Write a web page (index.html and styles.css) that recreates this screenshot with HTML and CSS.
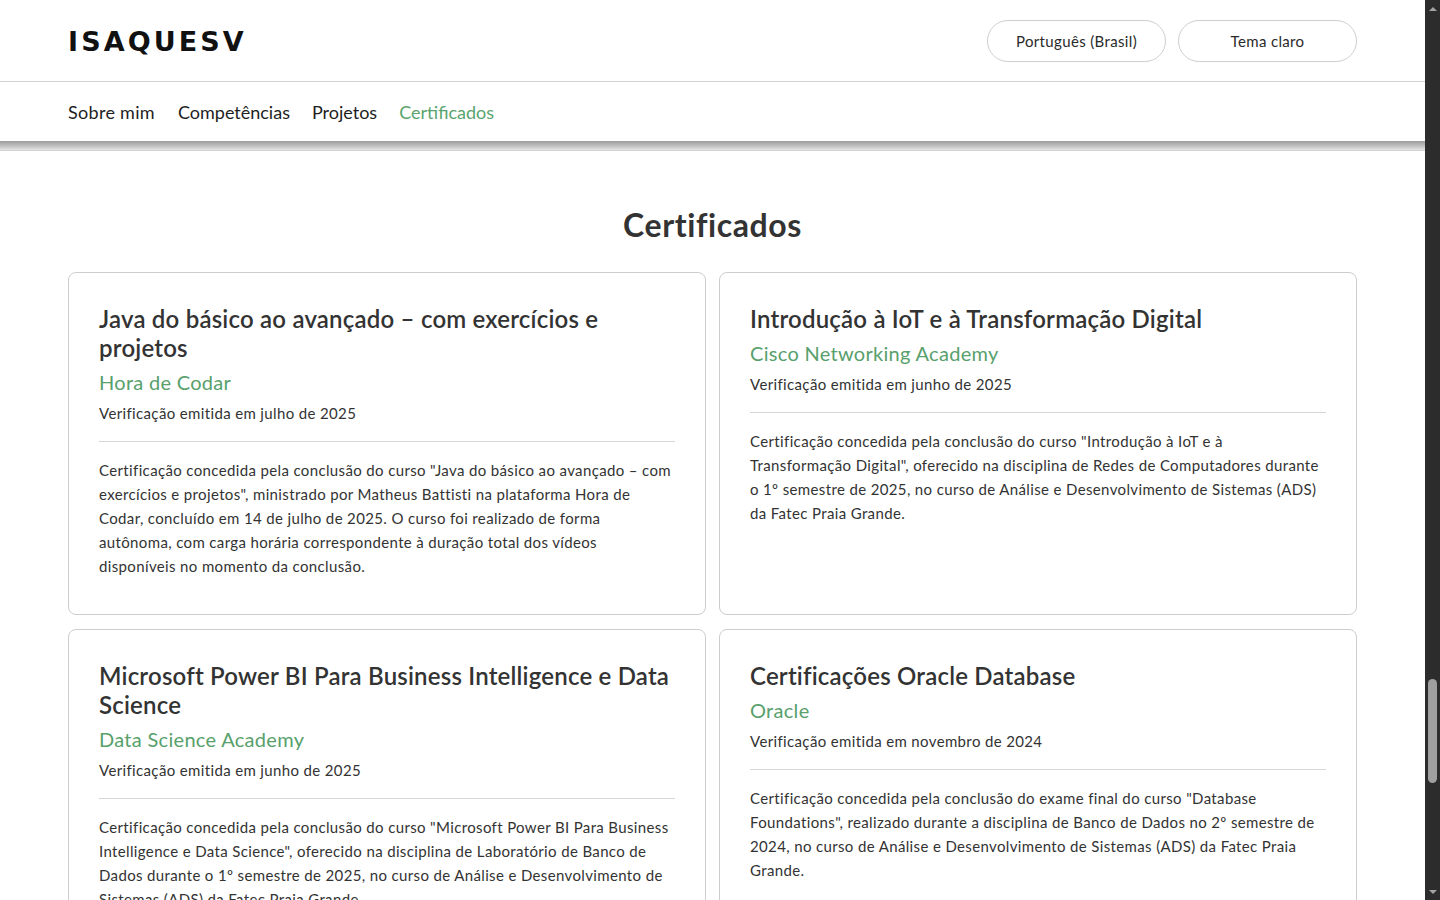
FILE: index.html
```html
<!DOCTYPE html>
<html lang="pt-BR">
<head>
<meta charset="utf-8">
<title>IsaqueSV — Certificados</title>
<link rel="stylesheet" href="styles.css">
</head>
<body>
<div class="viewport">
  <header class="site-header">
    <div class="topbar">
      <div class="container topbar-inner">
        <a class="logo" href="#">ISAQUESV</a>
        <div class="actions">
          <button class="pill" type="button">Português (Brasil)</button>
          <button class="pill" type="button">Tema claro</button>
        </div>
      </div>
    </div>
    <nav class="nav">
      <div class="container nav-inner">
        <a href="#sobre">Sobre mim</a>
        <a href="#competencias">Competências</a>
        <a href="#projetos">Projetos</a>
        <a href="#certificados" class="active">Certificados</a>
      </div>
    </nav>
    <div class="header-shadow"></div>
  </header>

  <main>
    <section class="certs container" id="certificados">
      <h2 class="section-title">Certificados</h2>
      <div class="cert-grid">
        <article class="card">
          <h3 class="card-title">Java do básico ao avançado – com exercícios e projetos</h3>
          <p class="org">Hora de Codar</p>
          <p class="issued">Verificação emitida em julho de 2025</p>
          <hr class="divider">
          <p class="desc">Certificação concedida pela conclusão do curso "Java do básico ao avançado – com exercícios e projetos", ministrado por Matheus Battisti na plataforma Hora de Codar, concluído em 14 de julho de 2025. O curso foi realizado de forma autônoma, com carga horária correspondente à duração total dos vídeos disponíveis no momento da conclusão.</p>
        </article>
        <article class="card">
          <h3 class="card-title">Introdução à IoT e à Transformação Digital</h3>
          <p class="org">Cisco Networking Academy</p>
          <p class="issued">Verificação emitida em junho de 2025</p>
          <hr class="divider">
          <p class="desc">Certificação concedida pela conclusão do curso "Introdução à IoT e à Transformação Digital", oferecido na disciplina de Redes de Computadores durante o 1º semestre de 2025, no curso de Análise e Desenvolvimento de Sistemas (ADS) da Fatec Praia Grande.</p>
        </article>
        <article class="card">
          <h3 class="card-title">Microsoft Power BI Para Business Intelligence e Data Science</h3>
          <p class="org">Data Science Academy</p>
          <p class="issued">Verificação emitida em junho de 2025</p>
          <hr class="divider">
          <p class="desc">Certificação concedida pela conclusão do curso "Microsoft Power BI Para Business Intelligence e Data Science", oferecido na disciplina de Laboratório de Banco de Dados durante o 1º semestre de 2025, no curso de Análise e Desenvolvimento de Sistemas (ADS) da Fatec Praia Grande.</p>
        </article>
        <article class="card">
          <h3 class="card-title">Certificações Oracle Database</h3>
          <p class="org">Oracle</p>
          <p class="issued">Verificação emitida em novembro de 2024</p>
          <hr class="divider">
          <p class="desc">Certificação concedida pela conclusão do exame final do curso "Database Foundations", realizado durante a disciplina de Banco de Dados no 2º semestre de 2024, no curso de Análise e Desenvolvimento de Sistemas (ADS) da Fatec Praia Grande.</p>
        </article>
      </div>
    </section>
  </main>
</div>
<div class="scrollbar" aria-hidden="true">
  <span class="sb-btn"><span class="sb-arrow up"></span></span>
  <div class="sb-track"><span class="sb-thumb"></span></div>
  <span class="sb-btn"><span class="sb-arrow down"></span></span>
</div>
</body>
</html>
```
FILE: styles.css
```css
html, body {
  height: 100%;
}

body {
  margin: 0;
  display: flex;
  overflow: hidden;
  background: #fff;
  color: #333;
  font-family: Lato, "Noto Sans", sans-serif;
}

.viewport {
  flex: 1;
  min-width: 0;
  height: 100vh;
  overflow: hidden;
}

.container {
  padding: 0 68px;
}

/* Header */
.topbar {
  height: 81px;
  border-bottom: 1px solid #d2d2d2;
}

.topbar-inner {
  height: 100%;
  display: flex;
  align-items: center;
  justify-content: space-between;
}

.logo {
  display: inline-block;
  padding-top: 2px;
  font-family: "DejaVu Sans", Verdana, sans-serif;
  font-weight: 700;
  font-size: 27px;
  letter-spacing: 3.1px;
  color: #111;
  text-decoration: none;
}

.actions {
  display: flex;
  gap: 12px;
}

.pill {
  width: 179px;
  height: 42px;
  border: 1px solid #cfcfcf;
  border-radius: 999px;
  background: #fff;
  color: #2a2a2a;
  font-family: Lato, "Noto Sans", sans-serif;
  font-size: 15px;
  font-weight: 400;
  letter-spacing: 0.35px;
  padding: 0;
}

.nav {
  height: 59px;
}

.nav-inner {
  height: 100%;
  display: flex;
  align-items: center;
  gap: 22px;
}

.nav a {
  font-size: 18px;
  font-weight: 400;
  color: #1e1e1e;
  text-decoration: none;
}

.nav a:first-child {
  letter-spacing: 0.3px;
  margin-right: 1px;
}

.nav a.active {
  color: #5aa46e;
}

.header-shadow {
  height: 9px;
  background: linear-gradient(#9c9c9c, #c4c4c4 60%, #e4e4e4);
  border-bottom: 1px solid #d4d4d4;
  margin-bottom: 1px;
}

/* Section */
.certs {
  padding-top: 54px;
}

.section-title {
  margin: 0 0 28px;
  text-align: center;
  font-size: 32px;
  font-weight: 700;
  line-height: 1.2;
  letter-spacing: 0.6px;
  color: #333;
}

.cert-grid {
  display: grid;
  grid-template-columns: 1fr 1fr;
  gap: 14px 13px;
}

.card {
  border: 1px solid #cdcdcd;
  border-radius: 8px;
  padding: 32px 30px 36px;
}

.card-title {
  margin: 0;
  font-size: 24px;
  font-weight: 600;
  line-height: 1.2;
  letter-spacing: 0.2px;
  color: #333;
}

.org {
  margin: 7px 0 0;
  font-size: 20px;
  line-height: 1.2;
  letter-spacing: 0.3px;
  color: #58a06c;
}

.issued {
  margin: 7px 0 0;
  font-size: 15px;
  line-height: 24px;
  letter-spacing: 0.36px;
  color: #333;
}

.divider {
  border: 0;
  border-top: 1px solid #d6d6d6;
  margin: 16px 0;
}

.desc {
  margin: 0;
  font-size: 15px;
  line-height: 24px;
  letter-spacing: 0.36px;
  color: #333;
}

/* Scrollbar */
.scrollbar {
  width: 15px;
  height: 100vh;
  flex: none;
  background: #2c2c2c;
  display: flex;
  flex-direction: column;
}

.sb-btn {
  height: 15px;
  display: flex;
  align-items: center;
  justify-content: center;
}

.sb-arrow {
  width: 0;
  height: 0;
  border-left: 4px solid transparent;
  border-right: 4px solid transparent;
}

.sb-arrow.up {
  border-bottom: 4px solid #a3a3a3;
  margin-top: 2px;
}

.sb-arrow.down {
  border-top: 4px solid #a3a3a3;
  margin-bottom: 2px;
}

.sb-track {
  flex: 1;
  display: flex;
  flex-direction: column;
  align-items: center;
}

.sb-thumb {
  margin-top: 664px;
  width: 9px;
  height: 104px;
  border-radius: 5px;
  background: #9f9f9f;
}
```
